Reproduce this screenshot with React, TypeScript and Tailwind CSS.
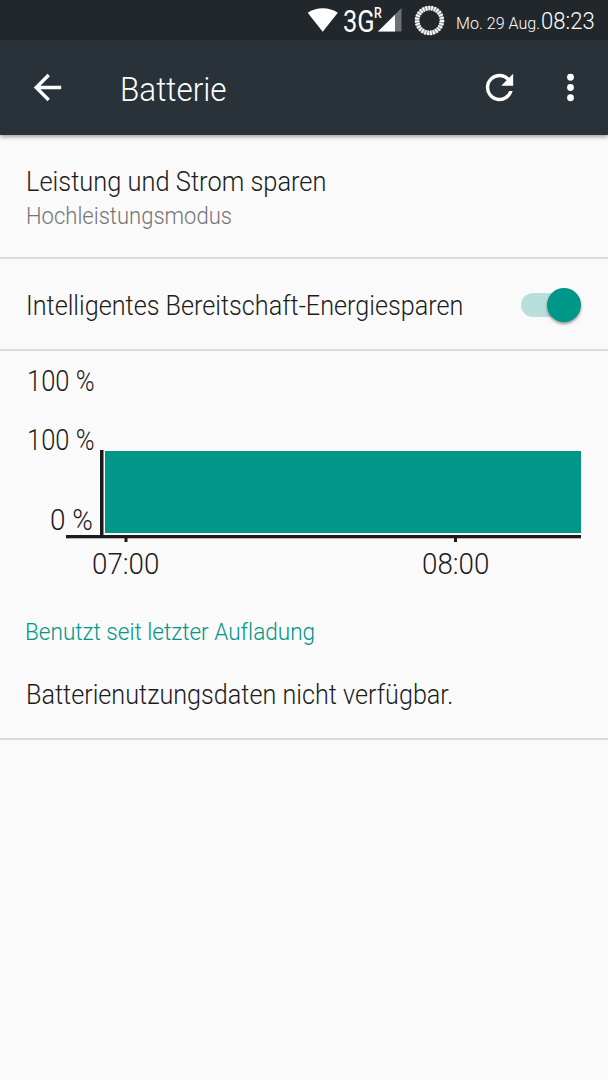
import type { ReactNode } from "react";

type LabelProps = { className: string; children: ReactNode };

// single line of narrow text, squeezed horizontally from its left edge
function Label({ className, children }: LabelProps) {
  return (
    <div className={`w-max origin-left whitespace-pre font-light [font-variant-ligatures:none] ${className}`}>
      {children}
    </div>
  );
}

function StatusBar() {
  return (
    <div className="flex h-10 items-start bg-[#21272b] pl-[307px] text-white">
      <svg className="mt-[7px] h-[26px] w-8 shrink-0" viewBox="0 0 32 26" fill="#fff">
        <path d="M.7 5.800C9-.2 22.500-.2 30.800 5.800L15.700 24.800z" />
      </svg>
      <div className="h-10 w-[35px] shrink-0 pt-[5px] pl-1">
        <Label className="font-normal! text-[31px] leading-[34px] scale-x-[0.82]">3G</Label>
      </div>
      <div className="h-10 w-1 shrink-0 pt-[6px]">
        <Label className="text-[15px] leading-[15px] font-medium! scale-x-[0.82]">R</Label>
      </div>
      <svg className="mt-[7px] h-[26px] w-[26px] shrink-0" viewBox="0 0 26 26">
        <path d="M23.500 1V24.500H0z" fill="#6e7174" />
        <path d="M17 7.700V24.500H0z" fill="#fff" />
      </svg>
      <svg className="mt-[5px] ml-[10px] h-[31px] w-[31px] shrink-0" viewBox="0 0 31 31" fill="none">
        <circle cx="15.500" cy="15.500" r="12.400" stroke="#9b9fa1" strokeWidth="4" />
        <circle cx="15.500" cy="15.500" r="12.400" stroke="#fff" strokeWidth="4.800" strokeDasharray="1.500 1.350" />
      </svg>
      <div className="h-10 w-[96px] shrink-0 pt-[13px] pl-[11px]">
        <Label className="text-[16.5px] leading-[22px] scale-x-[0.975]">Mo. 29 Aug.</Label>
      </div>
      <div className="h-10 pt-1">
        <Label className="text-[24px] leading-[34px] scale-x-[0.92]">08:23</Label>
      </div>
    </div>
  );
}

function Toolbar() {
  return (
    <header className="relative flex h-[95px] items-center bg-[#283238] text-white shadow-[0_2px_4px_rgba(0,0,0,0.35)]">
      <svg className="ml-[27px] h-[41px] w-[41px] shrink-0" viewBox="0 0 24 24" fill="#fff">
        <path d="M20 11H7.830l5.590-5.590L12 4l-8 8 8 8 1.410-1.410L7.830 13H20v-2z" />
      </svg>
      <div className="w-[411px] shrink-0 pt-[2px] pl-[52px]">
        <Label className="text-[34px] leading-[40px] scale-x-[0.925]">Batterie</Label>
      </div>
      <svg className="h-[41px] w-[41px] shrink-0" viewBox="0 0 24 24" fill="#fff">
        <path d="M17.650 6.350A7.958 7.958 0 0 0 12 4a8 8 0 1 0 7.730 10h-2.080A6 6 0 1 1 12 6c1.660 0 3.140.69 4.220 1.780L13 11h7V4l-2.350 2.350z" />
      </svg>
      <svg className="ml-[30px] h-[41px] w-[41px] shrink-0" viewBox="0 0 24 24" fill="#fff">
        <circle cx="12" cy="6" r="2" />
        <circle cx="12" cy="12" r="2" />
        <circle cx="12" cy="18" r="2" />
      </svg>
    </header>
  );
}

function Toggle() {
  return (
    <div className="flex h-[34px] w-[60px] items-center">
      <div className="h-6 w-[44px] rounded-full bg-[#b9dfdc]" />
      <div className="-ml-[18px] size-[34px] shrink-0 rounded-full bg-[#009688] shadow-[0_2px_3px_rgba(0,0,0,0.4)]" />
    </div>
  );
}

function BatteryChart() {
  return (
    <svg className="block h-[93px] w-[515px]" viewBox="0 0 515 93">
      <rect x="39" y="1" width="476" height="82" fill="#009688" />
      <rect x="34" y="0" width="3.500" height="87" fill="#1b1b1b" />
      <rect x="0" y="85" width="515" height="3.300" fill="#1b1b1b" />
      <rect x="58.500" y="87" width="3" height="5" fill="#1b1b1b" />
      <rect x="388" y="87" width="3" height="5" fill="#1b1b1b" />
    </svg>
  );
}

export default function App() {
  return (
    <div className="h-[1080px] w-[608px] overflow-hidden bg-[#fafafa] font-[Roboto,'Noto_Sans',sans-serif] text-[#1c1c1c]">
      <StatusBar />
      <Toolbar />
      <main>
        <section className="h-[124px] border-b-2 border-[#dadada] pt-[29px] pl-[26px]">
          <Label className="text-[28px] leading-[36px] scale-x-[0.908]">Leistung und Strom sparen</Label>
          <Label className="text-[24px] leading-[32px] text-[#757575] scale-x-[0.918]">Hochleistungsmodus</Label>
        </section>

        <section className="flex h-[92px] items-center justify-between border-b-2 border-[#dadada] pt-px pr-[27px] pl-[26px]">
          <div className="pt-[2px]">
            <Label className="text-[27.5px] leading-[36px] scale-x-[0.916]">Intelligentes Bereitschaft-Energiesparen</Label>
          </div>
          <Toggle />
        </section>

        <section className="h-[389px] border-b-2 border-[#dadada]">
          <div className="h-[99px] pt-[11px] pl-[27px]">
            <Label className="text-[30px] leading-[38px] scale-x-[0.85]">100 %</Label>
          </div>
          <div className="-mt-[29px] flex h-[122px] pl-[27px]">
            <div className="w-[39px] shrink-0">
              <Label className="text-[30px] leading-[38px] scale-x-[0.85]">100 %</Label>
              <div className="pt-[42px] pl-[23px]">
                <Label className="text-[30px] leading-[38px] scale-x-[0.93]">0 %</Label>
              </div>
            </div>
            <div className="pt-[29px]">
              <BatteryChart />
            </div>
          </div>
          <div className="flex h-[50px] pt-[2px] pl-[92px]">
            <div className="w-[330px] shrink-0">
              <Label className="text-[30px] leading-[38px] scale-x-[0.925]">07:00</Label>
            </div>
            <Label className="text-[30px] leading-[38px] scale-x-[0.925]">08:00</Label>
          </div>
          <div className="pt-[23px] pl-[25px]">
            <Label className="text-[23.5px] leading-[32px] text-[#009688] scale-x-[0.96]">Benutzt seit letzter Aufladung</Label>
          </div>
          <div className="pt-[29px] pl-[25.5px]">
            <Label className="text-[27.5px] leading-[36px] scale-x-[0.916]">Batterienutzungsdaten nicht verfügbar.</Label>
          </div>
        </section>
      </main>
    </div>
  );
}
